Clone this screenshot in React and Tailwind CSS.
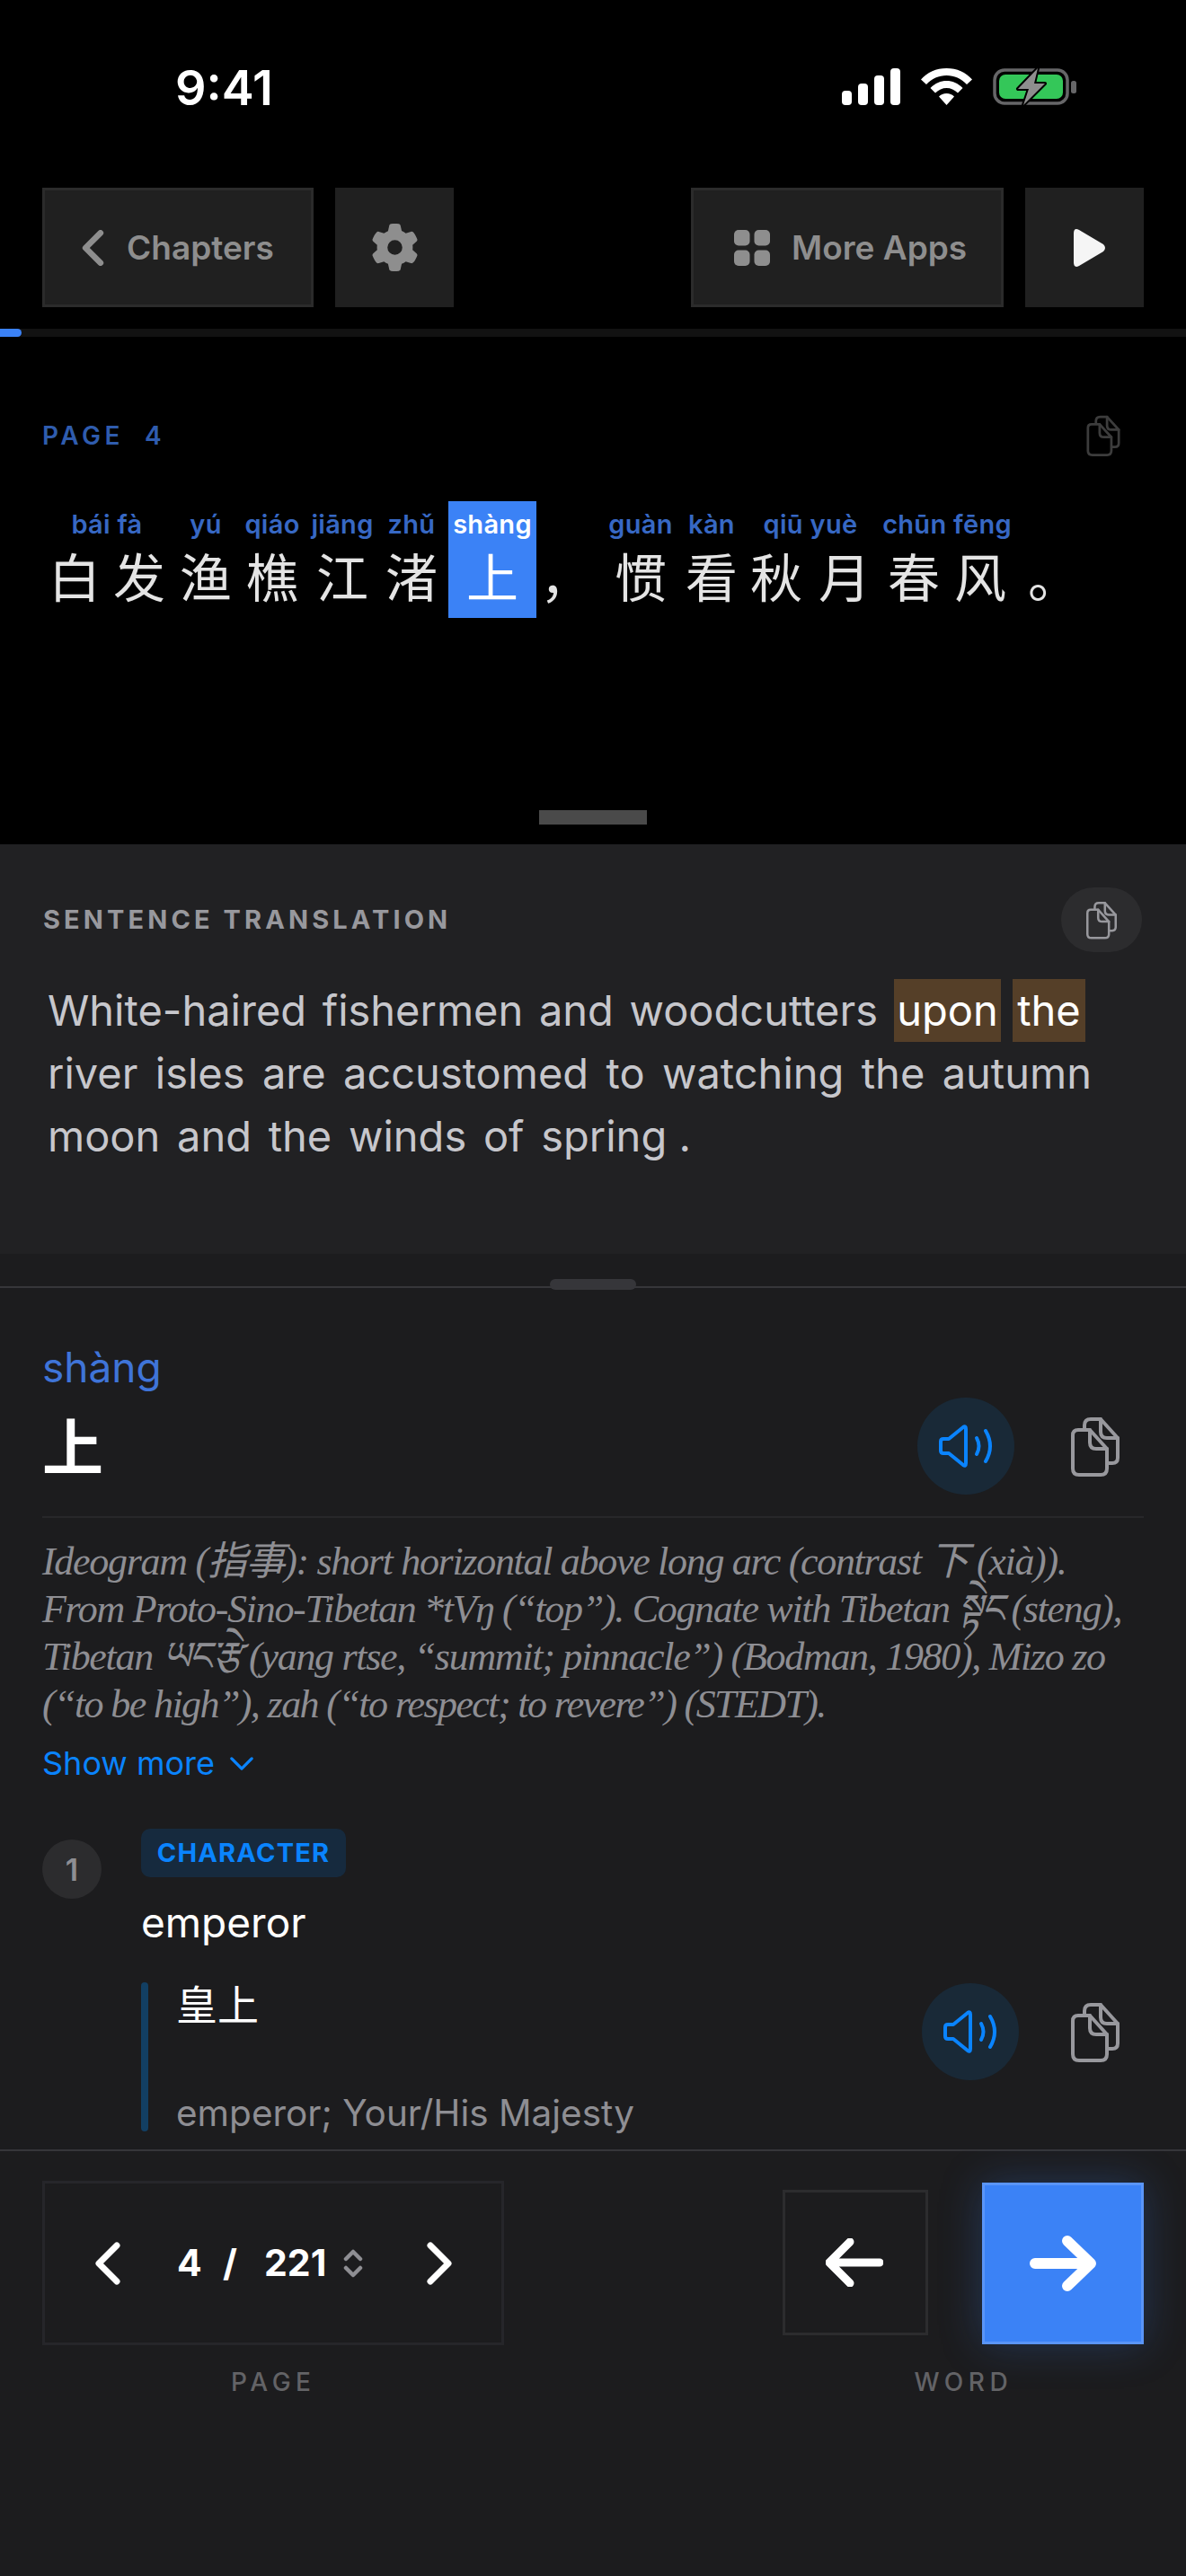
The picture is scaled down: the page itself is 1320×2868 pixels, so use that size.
import React from "react";
import { FaGear } from "react-icons/fa6";

function CopyIcon({ className }) {
  return (
    <svg viewBox="0 0 54 67" fill="none" stroke="currentColor" strokeWidth="4" strokeLinecap="round" strokeLinejoin="round" className={className}>
      <path d="M8 15H21L40 36V58Q40 65 33 65H9Q2 65 2 58V21Q2 15 8 15Z" />
      <path d="M21 15V29Q21 36 28 36H40" />
      <path d="M15 13V10Q15 3 22 3H33L52 24V46Q52 52 46 52H41" />
      <path d="M33 3V17Q33 24 40 24H52" />
    </svg>
  );
}

function SpeakerIcon() {
  return (
    <svg viewBox="0 0 60 48" fill="none" stroke="#0a84ff" strokeWidth="4" strokeLinecap="round" strokeLinejoin="round" className="w-[60px] h-[48px]">
      <path d="M5 16H11L27 3Q30 1 30 5V43Q30 47 27 45L11 32H5Q2 32 2 29V19Q2 16 5 16Z" />
      <path d="M42 15Q47 24 42 33" />
      <path d="M52 7Q62 24 52 41" />
    </svg>
  );
}

function Chevron({ dir, className, width = 6 }) {
  return (
    <svg viewBox="0 0 30 48" fill="none" stroke="currentColor" strokeWidth={width} strokeLinecap="round" strokeLinejoin="round" className={className}>
      <path d={dir === "left" ? "M25 4L5 24L25 44" : "M5 4L25 24L5 44"} />
    </svg>
  );
}

function StatusBar() {
  return (
    <div className="flex justify-between items-start h-[209px] pl-[195px] pr-[122px] pt-[67px] text-white">
      <div className="text-[54px] leading-[62px] font-semibold">9:41</div>
      <div className="flex items-center pt-[8px]">
        <svg viewBox="0 0 65 41" className="w-[65px] h-[41px] fill-white">
          <rect x="0" y="25" width="11" height="16" rx="4" />
          <rect x="18" y="17" width="11" height="24" rx="4" />
          <rect x="36" y="8" width="11" height="33" rx="4" />
          <rect x="54" y="0" width="11" height="41" rx="4" />
        </svg>
        <svg viewBox="0 0 57 41" className="w-[57px] h-[41px] ml-[23px] fill-white">
          <path d="M28.5 0C40 0 50 4.500 57 12.500L51 18C45 11.500 37 8 28.500 8C20 8 12 11.500 6 18L0 12.500C7 4.500 17 0 28.500 0Z" />
          <path d="M28.500 14C35 14 41 16.500 46.500 22L41 27.500C37.500 24 33 22 28.500 22C24 22 19.500 24 16 27.500L10.500 22C16 16.500 22 14 28.500 14Z" />
          <path d="M28.500 28C32 28 35 29.200 37 31.500L28.500 41L20 31.500C22 29.200 25 28 28.500 28Z" />
        </svg>
        <svg viewBox="0 0 93 43" className="w-[93px] h-[43px] ml-[23px]" fill="none">
          <rect x="2" y="3" width="81" height="37" rx="11" stroke="#666668" strokeWidth="3.500" />
          <rect x="7" y="8" width="71" height="27" rx="7" fill="#34c759" />
          <rect x="87" y="15" width="6" height="14" rx="2.500" fill="#666668" />
          <path d="M50 1L28 24H40L34 42L58 18H46Z" fill="#8e8e8e" stroke="#000" strokeWidth="4" strokeLinejoin="round" paintOrder="stroke" />
        </svg>
      </div>
    </div>
  );
}

function ToolButton({ className, children }) {
  return (
    <div className={`h-[133px] bg-[#202020] flex items-center ${className}`}>{children}</div>
  );
}

function Toolbar() {
  return (
    <div className="flex px-[47px] text-[#8e8e8e] font-semibold text-[37px]">
      <ToolButton className="w-[302px] border-[3px] border-[#2b2b2b] pl-[41px]">
        <Chevron dir="left" className="w-[25px] h-[40px]" width={8} />
        <span className="ml-[25px]">Chapters</span>
      </ToolButton>
      <ToolButton className="w-[132px] ml-[24px] justify-center">
        <FaGear className="w-[53px] h-[53px]" />
      </ToolButton>
      <div className="flex-1" />
      <ToolButton className="w-[348px] border-[3px] border-[#2b2b2b] pl-[45px]">
        <svg viewBox="0 0 40 40" className="w-[40px] h-[40px] fill-[#8e8e8e]">
          <rect x="0" y="0" width="17.500" height="17.500" rx="5" />
          <rect x="22.500" y="0" width="17.500" height="17.500" rx="5" />
          <rect x="0" y="22.500" width="17.500" height="17.500" rx="5" />
          <rect x="22.500" y="22.500" width="17.500" height="17.500" rx="5" />
        </svg>
        <span className="ml-[24px]">More Apps</span>
      </ToolButton>
      <ToolButton className="w-[132px] ml-[24px] pl-[54px]">
        <svg viewBox="0 0 36 42" className="w-[36px] h-[42px] fill-[#f5f5f5]">
          <path d="M0 5Q0 -2 6 1L33 17Q37 21 33 25L6 41Q0 44 0 37Z" />
        </svg>
      </ToolButton>
    </div>
  );
}

const WORDS = [
  { w: 150, py: "bái fà", hz: "白发", ls: "tracking-[14px] pl-[14px]", cell: "pr-[6px]" },
  { w: 64, py: "yú", hz: "渔" },
  { w: 84, py: "qiáo", hz: "樵" },
  { w: 72, py: "jiāng", hz: "江" },
  { w: 82, py: "zhǔ", hz: "渚" },
  { w: 98, py: "shàng", hz: "上", active: true },
  { w: 66, py: "", hz: "，" },
  { w: 100, py: "guàn", hz: "惯" },
  { w: 58, py: "kàn", hz: "看" },
  { w: 162, py: "qiū yuè", hz: "秋月", ls: "tracking-[18px] pl-[18px]" },
  { w: 142, py: "chūn fēng", hz: "春风", ls: "tracking-[16px] pl-[16px]" },
  { w: 96, py: "", hz: "。" },
];

function Sentence() {
  return (
    <div className="flex mt-[50px]">
      {WORDS.map((w, i) => (
        <div
          key={i}
          style={{ width: w.w }}
          className={`h-[130px] shrink-0 flex flex-col items-center ${w.cell || ""} ${w.active ? "bg-[#3b82f6]" : ""}`}
        >
          <div className={`h-[43px] pt-[10px] text-[29px] leading-[32px] font-semibold tracking-[0.3px] whitespace-nowrap ${w.active ? "text-white" : "text-[#3768c4]"}`}>
            {w.py}
          </div>
          <div className={`text-[58px] leading-[78px] whitespace-nowrap font-['Noto_Sans_CJK_SC',sans-serif] ${w.ls || ""} ${w.active ? "text-white" : "text-[#e4e4e4]"}`}>
            {w.hz}
          </div>
        </div>
      ))}
    </div>
  );
}

function PagePanel() {
  return (
    <div className="h-[565px] bg-black px-[47px] flex flex-col">
      <div className="flex justify-between items-center pt-[87px]">
        <div className="text-[28px] leading-[30px] font-semibold tracking-[4.500px] text-[#2f5cae] whitespace-pre">PAGE  4</div>
        <CopyIcon className="w-[38px] h-[46px] text-[#3c3c3c] mr-[26px]" />
      </div>
      <Sentence />
      <div className="flex-1 flex items-end justify-center pb-[22px]">
        <div className="w-[120px] h-[16px] bg-[#4a4a4a]" />
      </div>
    </div>
  );
}

function TranslationPanel() {
  const line = "flex justify-between h-[70px] leading-[70px] whitespace-nowrap";
  return (
    <div className="h-[456px] bg-[#212123] pl-[53px] pr-[49px] pt-[48px]">
      <div className="flex justify-between items-center -ml-[5px] h-[72px]">
        <div className="text-[29px] font-bold tracking-[4.100px] text-[#98989d]">SENTENCE TRANSLATION</div>
        <div className="w-[90px] h-[72px] rounded-full bg-[#2c2c2e] flex items-center justify-center">
          <CopyIcon className="w-[34px] h-[43px] text-[#98989d]" />
        </div>
      </div>
      <div className="mt-[30px] text-[47px] text-[#c7c7cc]">
        <div className="flex items-center h-[70px] leading-[70px] whitespace-nowrap">
          <span className="w-[924px] flex justify-between shrink-0"><span>White-haired</span><span>fishermen</span><span>and</span><span>woodcutters</span></span>
          <span className="ml-[18px] w-[119px] h-[70px] bg-[#553f28] text-white text-center">upon</span>
          <span className="ml-[13px] w-[81px] h-[70px] bg-[#553f28] text-white text-center">the</span>
        </div>
        <div className={`${line} w-[1162px]`}>
          <span>river</span><span>isles</span><span>are</span><span>accustomed</span><span>to</span><span>watching</span><span>the</span><span>autumn</span>
        </div>
        <div className={`${line} w-[716px]`}>
          <span>moon</span><span>and</span><span>the</span><span>winds</span><span>of</span><span>spring .</span>
        </div>
      </div>
    </div>
  );
}

function DictPanel() {
  return (
    <div className="relative h-[997px] bg-[#1c1c1e] overflow-hidden px-[47px]">
      <div className="absolute left-0 right-0 top-[36px] h-[2px] bg-[#36363a]" />
      <div className="absolute left-[612px] top-[28px] w-[96px] h-[12px] rounded-full bg-[#36363a]" />
      <div className="pt-[99px] flex justify-between items-start">
        <div>
          <div className="text-[46px] leading-[54px] text-[#3f74d8]">shàng</div>
          <div className="mt-[17px] text-[68px] leading-[84px] font-semibold text-white font-['Noto_Sans_CJK_SC',sans-serif]">上</div>
        </div>
        <div className="flex items-center mt-[61px] pr-[27px]">
          <div className="w-[108px] h-[108px] rounded-full bg-[#192937] flex items-center justify-center">
            <SpeakerIcon />
          </div>
          <CopyIcon className="ml-[63px] w-[54px] h-[67px] text-[#98989d]" />
        </div>
      </div>
      <div className="mt-[24px] h-[2px] bg-[#27272a]" />
      <div className="mt-[22px] text-[44px] leading-[53px] italic tracking-[-1.3px] text-[#8e8e93] whitespace-nowrap font-['Liberation_Serif','Noto_Sans_CJK_SC',serif]">
        <div>Ideogram (指事): short horizontal above long arc (contrast 下 (xià)).</div>
        <div>From Proto-Sino-Tibetan *tVŋ (“top”). Cognate with Tibetan སྟེང (steng),</div>
        <div>Tibetan ཡང་རྩེ (yang rtse, “summit; pinnacle”) (Bodman, 1980), Mizo zo</div>
        <div className="tracking-[-1.6px]">(“to be high”), zah (“to respect; to revere”) (STEDT).</div>
      </div>
      <div className="mt-[16px] flex items-center text-[36px] leading-[46px] text-[#0a84ff]">
        Show more
        <svg viewBox="0 0 30 18" fill="none" stroke="currentColor" strokeWidth="3.500" strokeLinecap="round" strokeLinejoin="round" className="ml-[16px] w-[28px] h-[17px]">
          <path d="M3 3L15 15L27 3" />
        </svg>
      </div>
      <div className="mt-[50px] flex">
        <div className="w-[66px] h-[66px] mt-[12px] rounded-full bg-[#2c2c2e] flex items-center justify-center text-[34px] font-semibold text-[#8e8e93] shrink-0">1</div>
        <div className="ml-[44px] flex-1">
          <div className="w-[228px] h-[54px] rounded-[10px] bg-[#162a3e] flex items-center justify-center text-[29px] font-bold tracking-[1.2px] text-[#0a84ff]">CHARACTER</div>
          <div className="mt-[22px] text-[46px] leading-[56px] text-white">emperor</div>
          <div className="mt-[39px] flex items-start">
            <div className="w-[8px] h-[166px] rounded-full bg-[#123f63] shrink-0" />
            <div className="ml-[31px] flex-1">
              <div className="text-[46px] leading-[44px] text-white font-['Noto_Sans_CJK_SC',sans-serif]">皇上</div>
              <div className="mt-[77px] text-[40.5px] leading-[50px] text-[#8e8e93]">emperor; Your/His Majesty</div>
            </div>
            <div className="w-[108px] h-[108px] mt-[1px] rounded-full bg-[#192937] flex items-center justify-center shrink-0">
              <SpeakerIcon />
            </div>
            <CopyIcon className="ml-[58px] mr-[27px] mt-[22px] w-[54px] h-[67px] text-[#98989d] shrink-0" />
          </div>
        </div>
      </div>
    </div>
  );
}

function BottomBar() {
  return (
    <div className="flex-1 bg-[#1c1c1e] border-t-[2px] border-[#36363a] px-[47px] text-white">
      <div className="flex items-start h-[242px] pt-[33px]">
        <div className="w-[514px] h-[183px] border-[3px] border-[#26262a] flex items-center pl-[55px]">
          <Chevron dir="left" className="w-[30px] h-[48px]" width={7} />
          <div className="ml-[62px] w-[48px] text-[41px] font-bold">4</div>
          <div className="ml-[3px] w-[45px] text-[41px] font-bold">/</div>
          <div className="ml-[1px] text-[41px] font-bold">221</div>
          <svg viewBox="0 0 24 32" fill="none" stroke="#8e8e93" strokeWidth="4.500" strokeLinecap="round" strokeLinejoin="round" className="ml-[18px] w-[24px] h-[32px]">
            <path d="M4 11L12 3L20 11" />
            <path d="M4 21L12 29L20 21" />
          </svg>
          <Chevron dir="right" className="ml-[69px] w-[30px] h-[48px]" width={7} />
        </div>
        <div className="flex-1" />
        <div className="w-[162px] h-[162px] mt-[10px] border-[3px] border-[#2c2c2e] flex items-center justify-center">
          <svg viewBox="0 0 64 54" fill="none" stroke="#fff" strokeWidth="9" strokeLinecap="round" strokeLinejoin="round" className="w-[64px] h-[54px] -ml-[2px]">
            <path d="M60 27H5M27 4L4 27L27 50" />
          </svg>
        </div>
        <div className="w-[180px] h-[180px] mt-[2px] ml-[60px] bg-[#3b82f6] border-[3px] border-[#5a95f8] flex items-center justify-center shadow-[0_0_44px_rgba(59,130,246,0.25)]">
          <svg viewBox="0 0 74 62" fill="none" stroke="#fff" strokeWidth="12" strokeLinecap="round" strokeLinejoin="round" className="w-[74px] h-[62px]">
            <path d="M6 31H67M42 6L68 31L42 56" />
          </svg>
        </div>
      </div>
      <div className="flex text-[28px] leading-[30px] font-medium tracking-[5.500px] text-[#636366]">
        <div className="ml-[210px]">PAGE</div>
        <div className="ml-[666px]">WORD</div>
      </div>
    </div>
  );
}

export default function App() {
  return (
    <div className="w-[1320px] h-[2868px] bg-black flex flex-col overflow-hidden font-['Inter','Noto_Sans_CJK_SC',sans-serif]">
      <StatusBar />
      <Toolbar />
      <div className="h-[9px] mt-[24px] bg-[#121212] shrink-0">
        <div className="w-[24px] h-[9px] rounded-r-full bg-[#3b82f6]" />
      </div>
      <PagePanel />
      <TranslationPanel />
      <DictPanel />
      <BottomBar />
    </div>
  );
}
